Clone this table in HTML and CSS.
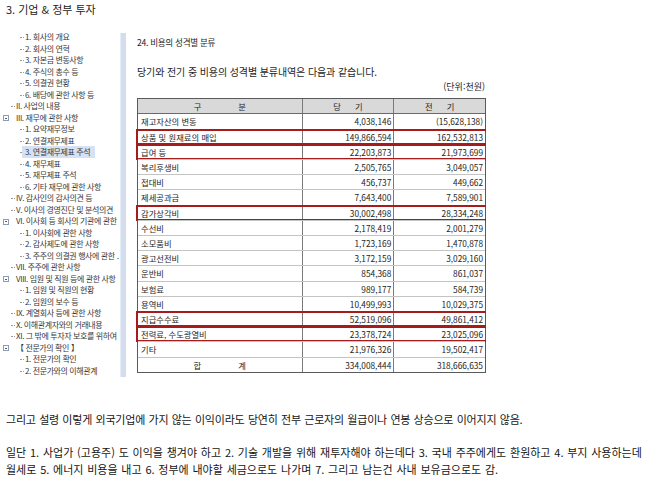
FILE: index.html
```html
<!DOCTYPE html>
<html lang="ko">
<head>
<meta charset="utf-8">
<title>3. 기업 &amp; 정부 투자</title>
<link rel="stylesheet" href="styles.css">
</head>
<body>
<h1 class="title">3. 기업 &amp; 정부 투자</h1>

<div class="shot">
  <ul class="tree">
    <li class="s">1. 회사의 개요</li>
    <li class="s">2. 회사의 연혁</li>
    <li class="s">3. 자본금 변동사항</li>
    <li class="s">4. 주식의 총수 등</li>
    <li class="s">5. 의결권 현황</li>
    <li class="s">6. 배당에 관한 사항 등</li>
    <li class="t">II. 사업의 내용</li>
    <li class="o">III. 재무에 관한 사항</li>
    <li class="s">1. 요약재무정보</li>
    <li class="s">2. 연결재무제표</li>
    <li class="s"><span class="sel">3. 연결재무제표 주석</span></li>
    <li class="s">4. 재무제표</li>
    <li class="s">5. 재무제표 주석</li>
    <li class="s">6. 기타 재무에 관한 사항</li>
    <li class="t">IV. 감사인의 감사의견 등</li>
    <li class="t">V. 이사의 경영진단 및 분석의견</li>
    <li class="o">VI. 이사회 등 회사의 기관에 관한</li>
    <li class="s">1. 이사회에 관한 사항</li>
    <li class="s">2. 감사제도에 관한 사항</li>
    <li class="s">3. 주주의 의결권 행사에 관한 .</li>
    <li class="t">VII. 주주에 관한 사항</li>
    <li class="o">VIII. 임원 및 직원 등에 관한 사항</li>
    <li class="s">1. 임원 및 직원의 현황</li>
    <li class="s">2. 임원의 보수 등</li>
    <li class="t">IX. 계열회사 등에 관한 사항</li>
    <li class="t">X. 이해관계자와의 거래내용</li>
    <li class="t">XI. 그 밖에 투자자 보호를 위하여</li>
    <li class="o">【 전문가의 확인 】</li>
    <li class="s">1. 전문가의 확인</li>
    <li class="s">2. 전문가와의 이해관계</li>
  </ul>
  <div class="bar"></div>
  <div class="doc">
    <div class="doc-title">24. 비용의 성격별 분류</div>
    <div class="doc-lead">당기와 전기 중 비용의 성격별 분류내역은 다음과 같습니다.</div>
    <div class="unit">(단위:천원)</div>
    <div class="tbl">
      <div class="row head">
        <div class="c1">구<i class="g45"></i>분</div>
        <div class="c2">당<i class="g23"></i>기</div>
        <div class="c3">전<i class="g23"></i>기</div>
      </div>
      <div class="row"><div class="c1">재고자산의 변동</div><div class="c2">4,038,146</div><div class="c3">(15,628,138)</div></div>
      <div class="row mark"><div class="c1">상품 및 원재료의 매입</div><div class="c2">149,866,594</div><div class="c3">162,532,813</div></div>
      <div class="row mark"><div class="c1">급여 등</div><div class="c2">22,203,873</div><div class="c3">21,973,699</div></div>
      <div class="row"><div class="c1">복리후생비</div><div class="c2">2,505,765</div><div class="c3">3,049,057</div></div>
      <div class="row"><div class="c1">접대비</div><div class="c2">456,737</div><div class="c3">449,662</div></div>
      <div class="row"><div class="c1">제세공과금</div><div class="c2">7,643,400</div><div class="c3">7,589,901</div></div>
      <div class="row mark"><div class="c1">감가상각비</div><div class="c2">30,002,498</div><div class="c3">28,334,248</div></div>
      <div class="row"><div class="c1">수선비</div><div class="c2">2,178,419</div><div class="c3">2,001,279</div></div>
      <div class="row"><div class="c1">소모품비</div><div class="c2">1,723,169</div><div class="c3">1,470,878</div></div>
      <div class="row"><div class="c1">광고선전비</div><div class="c2">3,172,159</div><div class="c3">3,029,160</div></div>
      <div class="row"><div class="c1">운반비</div><div class="c2">854,368</div><div class="c3">861,037</div></div>
      <div class="row"><div class="c1">보험료</div><div class="c2">989,177</div><div class="c3">584,739</div></div>
      <div class="row"><div class="c1">용역비</div><div class="c2">10,499,993</div><div class="c3">10,029,375</div></div>
      <div class="row mark"><div class="c1">지급수수료</div><div class="c2">52,519,096</div><div class="c3">49,861,412</div></div>
      <div class="row mark"><div class="c1">전력료, 수도광열비</div><div class="c2">23,378,724</div><div class="c3">23,025,096</div></div>
      <div class="row"><div class="c1">기타</div><div class="c2">21,976,326</div><div class="c3">19,502,417</div></div>
      <div class="row total"><div class="c1">합<i class="g45"></i>계</div><div class="c2">334,008,444</div><div class="c3">318,666,635</div></div>
    </div>
  </div>
</div>

<p class="para first">그리고 설령 이렇게 외국기업에 가지 않는 이익이라도 당연히 전부 근로자의 월급이나 연봉 상승으로 이어지지 않음.</p>
<p class="para second">일단 1. 사업가 (고용주) 도 이익을 챙겨야 하고 2. 기술 개발을 위해 재투자해야 하는데다 3. 국내 주주에게도 환원하고 4. 부지 사용하는데 월세로 5. 에너지 비용을 내고 6. 정부에 내야할 세금으로도 나가며 7. 그리고 남는건 사내 보유금으로도 감.</p>
</body>
</html>
```

FILE: styles.css
```css
html, body {
  margin: 0;
  padding: 0;
  background: #ffffff;
}

body {
  font-family: "Noto Sans CJK KR", "Noto Sans", sans-serif;
  color: #1a1a1a;
  padding: 0 4px 0 6px;
}

.title {
  margin: 0;
  font-size: 11px;
  font-weight: normal;
  line-height: 18px;
  color: #222;
}

/* embedded screenshot */
.shot {
  margin: 13px 0 0 -6px;
  display: flex;
  width: 486px;
  height: 346px;
  overflow: hidden;
}

.tree {
  list-style: none;
  margin: 0;
  padding: 0;
  width: 120px;
  flex: none;
  font-size: 8px;
  letter-spacing: -0.4px;
  color: #383838;
  overflow: hidden;
}

.tree li {
  height: 11.5px;
  line-height: 11.5px;
  white-space: nowrap;
  overflow: hidden;
}

.tree .s {
  padding-left: 20px;
}
.tree .s::before {
  content: "";
  display: inline-block;
  width: 4px;
  margin-right: 1px;
  vertical-align: middle;
  border-top: 1px dotted #9a9a9a;
}

.tree .t {
  padding-left: 11px;
}
.tree .t::before {
  content: "";
  display: inline-block;
  width: 4px;
  margin-right: 1px;
  vertical-align: middle;
  border-top: 1px dotted #9a9a9a;
}

.tree .o {
  padding-left: 3px;
}
.tree .o::before {
  content: "";
  display: inline-block;
  box-sizing: border-box;
  width: 6px;
  height: 6px;
  margin-right: 7px;
  vertical-align: middle;
  border: 1px solid #8c9cb4;
  background: linear-gradient(#4a5a78, #4a5a78) center / 2px 1px no-repeat, #fff;
}

.tree .sel {
  background: #d6e2f3;
  margin-left: -3px;
  padding: 0 5px 0 3px;
  display: inline-block;
  height: 11.5px;
}

.bar {
  flex: none;
  width: 6px;
  margin-top: 2px;
  background: #d3ddee;
  border-left: 1px solid #e6ecf6;
  box-sizing: border-box;
}

.doc {
  flex: none;
  width: 349px;
  padding-left: 11px;
  color: #1e1e1e;
}

.doc-title {
  margin-top: 5px;
  font-size: 8.6px;
  letter-spacing: -0.3px;
  line-height: 12px;
}

.doc-lead {
  margin-top: 18px;
  font-size: 10px;
  letter-spacing: -0.1px;
  line-height: 12px;
}

.unit {
  margin-top: 3px;
  font-size: 9px;
  line-height: 12px;
  text-align: right;
  padding-right: 1px;
}

.tbl {
  margin-top: 4.5px;
  border: 1px solid #5a5a5a;
  font-size: 8.3px;
  color: #1e1e1e;
}

.row {
  display: flex;
  height: 15.2px;
  line-height: 14.2px;
  box-sizing: border-box;
  border-top: 1px solid #c4c4c4;
  position: relative;
}

.row.head {
  height: 15px;
  border-top: 0;
  background: #d9d9d9;
  border-bottom: 1px solid #6a6a6a;
  text-align: center;
}

.row.head + .row {
  border-top: 0;
}

.c1 {
  width: 164px;
  box-sizing: border-box;
  padding-left: 3px;
  white-space: nowrap;
}

.c2, .c3 {
  width: 92px;
  box-sizing: border-box;
  border-left: 1px solid #7a7a7a;
  text-align: right;
  padding-right: 2px;
}

.head .c1, .head .c2, .head .c3,
.total .c1 {
  text-align: center;
  padding: 0;
}

.g45 {
  display: inline-block;
  width: 37px;
}
.g23 {
  display: inline-block;
  width: 14px;
}

.row.mark::after {
  content: "";
  position: absolute;
  left: -2px;
  right: -3px;
  top: -1px;
  bottom: -1px;
  border: 2px solid #a61b1b;
  pointer-events: none;
}

.para {
  margin: 0;
  font-size: 11px;
  line-height: 17px;
  letter-spacing: -0.2px;
  word-spacing: 0.5px;
  word-break: keep-all;
  color: #161616;
}

.para.first {
  margin-top: 33.5px;
  margin-bottom: 16px;
}

.para.second {
  letter-spacing: 0;
  word-spacing: 0.7px;
}
```
